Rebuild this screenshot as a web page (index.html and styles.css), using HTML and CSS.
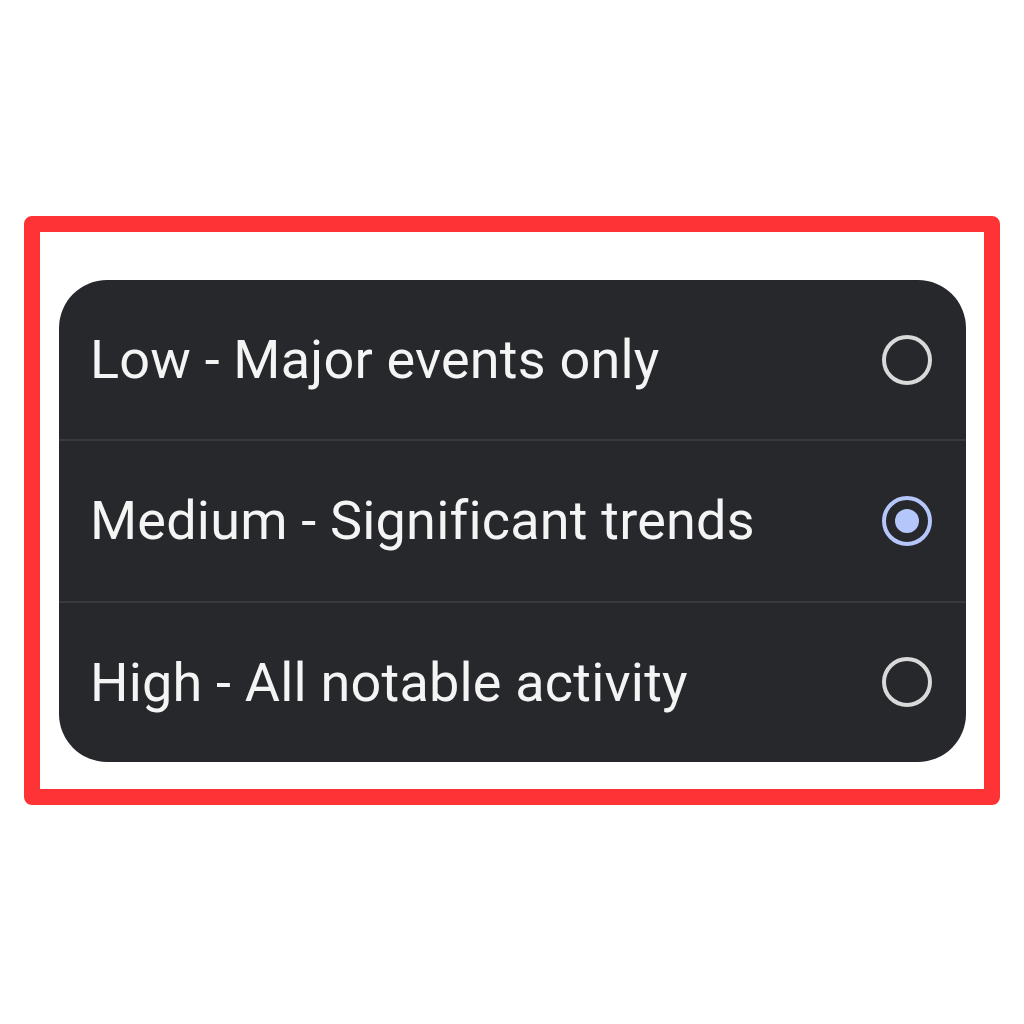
FILE: index.html
```html
<!DOCTYPE html>
<html lang="en">

<head>
    <meta charset="UTF-8">
    <meta name="viewport" content="width=device-width, initial-scale=1.0">
    <title>Alert Sensitivity</title>
    <link rel="stylesheet" href="styles.css">
</head>

<body>

    <!-- Highlight frame -->
    <div class="frame">

        <!-- Options card -->
        <div class="options">
            <label class="option">
                <span class="option-text">Low - Major events only</span>
                <span class="radio"></span>
            </label>
            <label class="option">
                <span class="option-text">Medium - Significant trends</span>
                <span class="radio checked"></span>
            </label>
            <label class="option">
                <span class="option-text">High - All notable activity</span>
                <span class="radio"></span>
            </label>
        </div>

    </div>

</body>

</html>
```

FILE: styles.css
```css
/* Global Styles */
body {
    margin: 0;
    background-color: #ffffff;
    font-family: 'Roboto', 'Liberation Sans', sans-serif;
    height: 1024px;
    padding-top: 216px;
    padding-left: 24px;
    box-sizing: border-box;
}

/* Red highlight frame */
.frame {
    width: 976px;
    height: 589px;
    box-sizing: border-box;
    border: 16px solid #fe3336;
    border-radius: 8px;
    padding: 48px 18px 27px 19px;
}

/* Options card */
.options {
    height: 100%;
    background-color: #27282c;
    border-radius: 48px;
    display: flex;
    flex-direction: column;
    overflow: hidden;
}

.option {
    flex: 1;
    display: flex;
    align-items: center;
    justify-content: space-between;
    padding: 0 34px 0 31px;
    border-top: 2px solid #393a3e;
}

.option:first-child {
    border-top: none;
}

.option-text {
    color: #f4f4f4;
    font-size: 54px;
    letter-spacing: 0.2px;
}

/* Radio buttons */
.radio {
    width: 50px;
    height: 50px;
    box-sizing: border-box;
    border: 4px solid #d9d9d9;
    border-radius: 50%;
    display: flex;
    align-items: center;
    justify-content: center;
}

.radio.checked {
    border-color: #b5c6fa;
}

.radio.checked::after {
    content: "";
    width: 24px;
    height: 24px;
    border-radius: 50%;
    background-color: #b5c6fa;
}
```
